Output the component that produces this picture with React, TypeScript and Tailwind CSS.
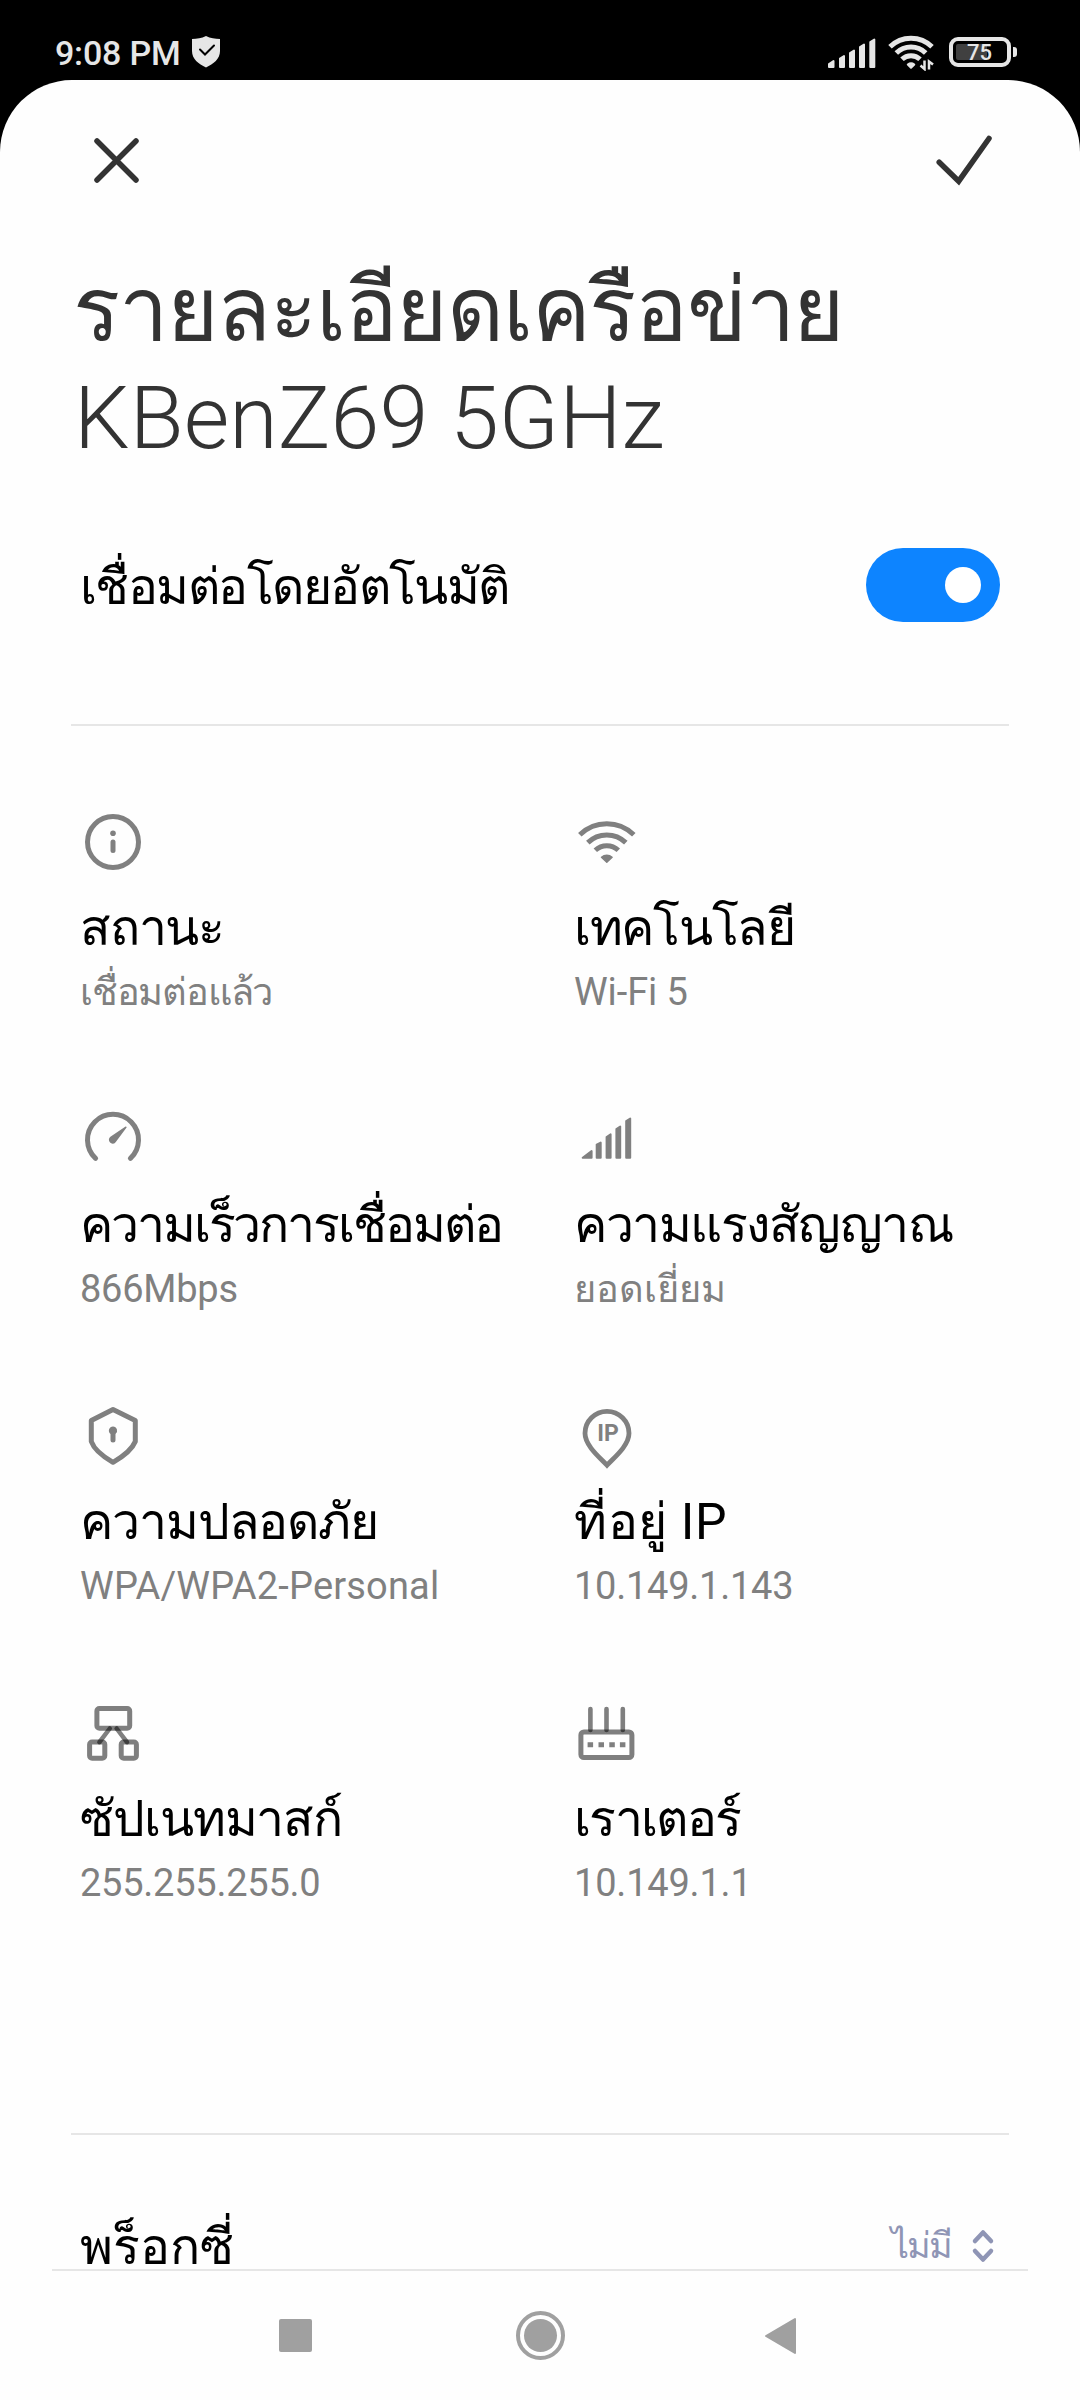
import type { ReactNode } from 'react';
import { clsx } from 'clsx';

function InfoIcon() {
  return (
    <svg viewBox="0 0 64 64" className="size-16" fill="none" stroke="#808080">
      <circle cx="32" cy="32" r="25.5" strokeWidth="5" />
      <circle cx="32" cy="23.2" r="2.8" fill="#808080" stroke="none" />
      <path d="M32 32v8.5" strokeWidth="5" strokeLinecap="round" />
    </svg>
  );
}

function WifiIcon() {
  return (
    <svg viewBox="0 0 64 64" className="size-16" fill="none" stroke="#808080" strokeWidth="5">
      <path d="M4.8 24.7A38.5 38.5 0 0 1 58.8 24.7" />
      <path d="M12.8 32.6A27.3 27.3 0 0 1 50.8 32.6" />
      <path d="M20.3 40.2A16.8 16.8 0 0 1 43.3 40.2" />
      <path d="M26.5 47.2a8 8 0 0 1 10.6 0l-5.3 5z" fill="#808080" strokeWidth="1.5" strokeLinejoin="round" />
    </svg>
  );
}

function GaugeIcon() {
  return (
    <svg viewBox="0 0 64 64" className="size-16" fill="none">
      <path d="M14.6 51.4A25.5 25.5 0 1 1 49.4 51.4" stroke="#808080" strokeWidth="5" strokeLinecap="round" />
      <path d="M44.2 19.7a.8.8 0 0 1 1.2 1.1L34.8 35a3.8 3.8 0 1 1-5.4-5.2z" fill="#808080" />
    </svg>
  );
}

function SignalIcon() {
  return (
    <svg viewBox="0 0 64 64" className="size-16" fill="#808080" stroke="#808080" strokeWidth="2" strokeLinejoin="round">
      <path d="M7.7 50.8 16.6 44v6.8z" />
      <path d="M21.7 50.8V37.6l4-2v15.2z" />
      <path d="M31.6 50.8V30l4-2.6v23.4z" />
      <path d="M41.4 50.8V22l3.8-2.4v31.2z" />
      <path d="M51.2 50.8V14l4-2.4v39.2z" />
    </svg>
  );
}

function ShieldIcon() {
  return (
    <svg viewBox="0 0 64 64" className="size-16" fill="none">
      <path d="M32 5.6 54.3 16.6V37.5Q50 48 32 58.3 14 48 10.3 37.5V16.6z" stroke="#808080" strokeWidth="5" strokeLinejoin="round" />
      <path d="M32 22.4a4.2 4.2 0 0 1 2.5 7.5v6.2a2.5 2.5 0 0 1-5 0v-6.2a4.2 4.2 0 0 1 2.5-7.5z" fill="#808080" />
    </svg>
  );
}

function IpIcon() {
  return (
    <svg viewBox="0 0 64 64" className="size-16 overflow-visible" fill="none">
      <path d="M32 61.2C26 54.5 10 42 10 29.3a22 22 0 0 1 44 0C54 42 38 54.5 32 61.2z" stroke="#808080" strokeWidth="4.8" />
      <text x="33" y="37" textAnchor="middle" className="font-['Roboto',sans-serif] text-[23px] font-bold" fill="#808080">IP</text>
    </svg>
  );
}

// strokes are translucent so the joints come out darker
function SubnetIcon() {
  return (
    <svg viewBox="0 0 64 64" className="size-16" fill="none" stroke="#000" strokeOpacity="0.5" strokeWidth="5">
      <rect x="15.9" y="7.6" width="32.8" height="19.6" rx="2.5" />
      <rect x="8.6" y="41" width="15.2" height="16.2" rx="2.5" />
      <rect x="40.2" y="41" width="15.2" height="16.2" rx="2.5" />
      <path d="M28.8 27.5 18.4 41.2" strokeLinecap="round" strokeWidth="4.5" />
      <path d="M35.6 27.5 46 41.2" strokeLinecap="round" strokeWidth="4.5" />
    </svg>
  );
}

function RouterIcon() {
  return (
    <svg viewBox="0 0 64 64" className="size-16" stroke="#000" strokeOpacity="0.5" fill="none" strokeWidth="5">
      <rect x="5.9" y="31" width="51" height="25.6" rx="3" />
      <path d="M15.4 8v21M31.5 8v21M47.8 8v21" strokeLinecap="round" strokeWidth="4.6" />
      <path d="M12.6 43.8h5.5M23.5 43.8h5.5M34.3 43.8h5.5M44.9 43.8h5.5" />
    </svg>
  );
}

type Detail = {
  label: string;
  labelClass: string;
  value: string;
  valueClass: string;
  icon: ReactNode;
};

const details: Detail[] = [
  { label: 'สถานะ', labelClass: 'tracking-[-1.2px]', value: 'เชื่อมต่อแล้ว', valueClass: 'tracking-[-1.2px]', icon: <InfoIcon /> },
  { label: 'เทคโนโลยี', labelClass: 'tracking-[-1.3px]', value: 'Wi-Fi 5', valueClass: 'tracking-[-0.1px]', icon: <WifiIcon /> },
  { label: 'ความเร็วการเชื่อมต่อ', labelClass: 'tracking-[-2.1px]', value: '866Mbps', valueClass: 'tracking-[-0.25px]', icon: <GaugeIcon /> },
  { label: 'ความแรงสัญญาณ', labelClass: 'tracking-[-1.5px]', value: 'ยอดเยี่ยม', valueClass: 'tracking-normal', icon: <SignalIcon /> },
  { label: 'ความปลอดภัย', labelClass: 'tracking-[-1.1px]', value: 'WPA/WPA2-Personal', valueClass: 'tracking-[0.18px]', icon: <ShieldIcon /> },
  { label: 'ที่อยู่ IP', labelClass: 'tracking-[0.6px]', value: '10.149.1.143', valueClass: 'tracking-[-0.25px]', icon: <IpIcon /> },
  { label: 'ซัปเนทมาสก์', labelClass: 'tracking-[-1.1px]', value: '255.255.255.0', valueClass: 'tracking-[-0.25px]', icon: <SubnetIcon /> },
  { label: 'เราเตอร์', labelClass: 'tracking-[-1.7px]', value: '10.149.1.1', valueClass: 'tracking-[-0.2px]', icon: <RouterIcon /> },
];

function StatusBar() {
  return (
    <div className="flex h-20 justify-between pl-[55px] pr-[63px] pt-[33px] text-[#e6e6e6]">
      <div className="flex items-start">
        <span className="text-[34px] leading-10 font-medium tracking-[-0.2px]">9:08 PM</span>
        <svg viewBox="0 0 30 34" className="ml-[11px] mt-0.5 h-[34px] w-[30px]">
          <path d="M15 1c4.5 2.2 9 3 14 3v12c0 8-6.5 13-14 16.5C7.5 29 1 24 1 16V4c5 0 9.5-.8 14-3z" fill="#e6e6e6" />
          <path d="m9 14.5 5 5 9-9" fill="none" stroke="#000" strokeWidth="2" strokeLinecap="round" />
        </svg>
      </div>
      <div className="flex items-start">
        <svg viewBox="0 0 50 34" className="mt-[3px] h-[34px] w-[50px]" fill="#e6e6e6" stroke="#e6e6e6" strokeWidth="2" strokeLinejoin="round">
          <path d="M2 31v-3l4.5-3v6z" />
          <path d="M13 31v-8.5l4-2.5v11z" />
          <path d="M23 31V17l4-2.5V31z" />
          <path d="M33 31V11l4-2.5V31z" />
          <path d="M43.3 31V6l4-2.5V31z" />
        </svg>
        <svg viewBox="0 0 48 36" className="ml-[11px] mt-0.5 h-9 w-12" fill="none" stroke="#e6e6e6" strokeWidth="5">
          <path d="M2 11.8A30 30 0 0 1 44 11.8" />
          <path d="M8.3 18A21 21 0 0 1 37.7 18" />
          <path d="M14 24.3A13 13 0 0 1 32 24.3" />
          <path d="M19.8 29.5a5.5 5.5 0 0 1 6.5 0L23 32.8z" fill="#e6e6e6" strokeWidth="2" strokeLinejoin="round" />
          <path d="M36.5 25.5V34l-4-3.5M41 34.5v-8l4 3" strokeWidth="2.5" />
        </svg>
        <div className="ml-[13px] mt-1 flex items-center">
          <div className="relative flex h-[30px] w-[62px] rounded-[9px] border-4 border-[#e6e6e6]">
            <div className="ml-[3px] mt-[3px] h-4 w-[31px] rounded-[2px] bg-[#404040]" />
            <span className="absolute left-[14px] top-0 text-[22px] leading-[23px] font-medium">75</span>
          </div>
          <div className="ml-0.5 h-[10px] w-1 rounded-r-[3px] bg-[#e6e6e6]" />
        </div>
      </div>
    </div>
  );
}

function NavBar() {
  return (
    <div className="flex h-[130px] items-center pl-[279px]">
      <div className="size-[33px] rounded-[2px] bg-[#a0a0a0]" />
      <div className="ml-[204px] flex size-[49px] items-center justify-center rounded-full border-4 border-[#a0a0a0]">
        <div className="size-[33px] rounded-full bg-[#a0a0a0]" />
      </div>
      <svg viewBox="0 0 34 40" className="ml-[198px] h-10 w-[34px]">
        <path d="M32 3v34L3 20z" fill="#a0a0a0" stroke="#a0a0a0" strokeWidth="2" strokeLinejoin="round" />
      </svg>
    </div>
  );
}

export default function App() {
  return (
    <div className="h-[2400px] w-[1080px] overflow-hidden bg-black font-['Roboto','Droid_Sans_Thai',serif]">
      <StatusBar />
      <div className="flex h-[2320px] flex-col rounded-t-[72px] bg-[#fefefe]">
        <div className="flex h-[176px] shrink-0 items-start justify-between pl-[90px] pr-[84px] pt-[54px]">
          <svg viewBox="0 0 52 52" className="size-[52px]" fill="none" stroke="#333" strokeWidth="5.5" strokeLinecap="round">
            <path d="m7 7 39 39M46 7 7 46" />
          </svg>
          <svg viewBox="0 0 64 52" className="h-[52px] w-16" fill="none" stroke="#333" strokeWidth="5.5" strokeLinecap="round">
            <path d="m7.2 28.2 19.5 19L57 4.5" />
          </svg>
        </div>

        <h1 className="h-[216px] shrink-0 text-[88px] leading-[108px] font-light whitespace-nowrap text-[#333]">
          <span className="block pl-[73px] tracking-[-1.25px]">รายละเอียดเครือข่าย</span>
          <span className="block pl-[74px] tracking-[0.1px]">KBenZ69 5GHz</span>
        </h1>

        <div className="mt-[76px] flex h-[74px] shrink-0 items-center justify-between pl-20 pr-[80px]">
          <span className="pt-1 text-[50px] leading-[78px] tracking-[-1.55px] text-black">เชื่อมต่อโดยอัตโนมัติ</span>
          <div className="flex h-[74px] w-[134px] items-center justify-end rounded-full bg-[#0d84ff] pr-[19px]">
            <div className="size-9 rounded-full bg-white" />
          </div>
        </div>

        <div className="mx-[71px] mt-[102px] h-0.5 shrink-0 bg-[#e6e6e6]" />

        <div className="grid shrink-0 auto-rows-[297px] grid-cols-[494px_1fr] pl-20 pt-[84px]">
          {details.map((item) => (
            <div key={item.label} className="flex flex-col whitespace-nowrap">
              <div className="pl-px">{item.icon}</div>
              <span className={clsx('mt-6 text-[50px] leading-[60px] text-black', item.labelClass)}>{item.label}</span>
              <span className={clsx('mt-[10px] text-[38px] leading-[48px] text-[#808080]', item.valueClass)}>{item.value}</span>
            </div>
          ))}
        </div>

        <div className="mx-[71px] mt-[135px] h-0.5 shrink-0 bg-[#e6e6e6]" />

        <div className="flex h-[134px] shrink-0 items-start justify-between pl-20 pr-[83px] pt-[82px]">
          <span className="text-[50px] leading-[60px] text-black">พร็อกซี่</span>
          <div className="flex items-center pt-[5px] text-[#8f95b5]">
            <span className="text-[36px] leading-[48px] tracking-[-2px]">ไม่มี</span>
            <svg viewBox="0 0 28 36" className="ml-[18px] h-9 w-7" fill="none" stroke="#8f95b5" strokeWidth="4.5" strokeLinecap="round" strokeLinejoin="round">
              <path d="m6 13 8-8.5 8 8.500M6 23l8 8.500 8-8.500" />
            </svg>
          </div>
        </div>
        <div className="mx-[52px] h-0.5 shrink-0 bg-[#e6e6e6]" />

        <NavBar />
      </div>
    </div>
  );
}
